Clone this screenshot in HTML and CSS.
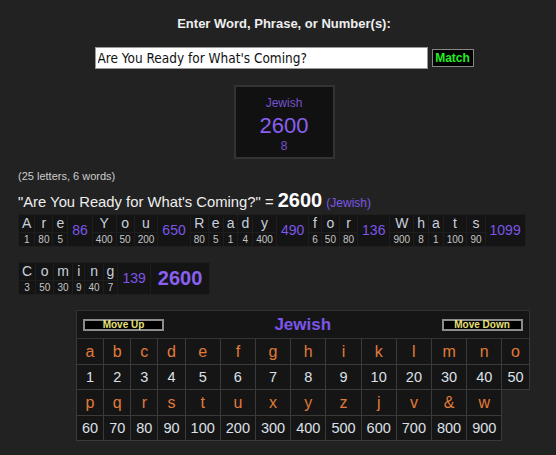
FILE: index.html
```html
<!DOCTYPE html>
<html lang="en">
<head>
    <meta charset="UTF-8">
    <title>Gematria Calculator</title>
    <link rel="stylesheet" href="styles.css">
</head>
<body>
    <div class="top">
        <div class="prompt">Enter Word, Phrase, or Number(s):</div>
        <div class="entry">
            <input class="phrase" type="text" value="Are You Ready for What's Coming?">
            <button class="match">Match</button>
        </div>
        <div class="cipher-box">
            <div class="cb-name">Jewish</div>
            <div class="cb-value">2600</div>
            <div class="cb-reduced">8</div>
        </div>
    </div>

    <div class="results">
        <div class="counts">(25 letters, 6 words)</div>
        <div class="summary">"Are You Ready for What's Coming?" = <b>2600</b> <span class="cipher-name">(Jewish)</span></div>

        <table class="word-line">
            <tr class="letters">
                <td>A</td><td>r</td><td>e</td><td class="sum" rowspan="2">86</td>
                <td>Y</td><td>o</td><td>u</td><td class="sum" rowspan="2">650</td>
                <td>R</td><td>e</td><td>a</td><td>d</td><td>y</td><td class="sum" rowspan="2">490</td>
                <td>f</td><td>o</td><td>r</td><td class="sum" rowspan="2">136</td>
                <td>W</td><td>h</td><td>a</td><td>t</td><td>s</td><td class="sum" rowspan="2">1099</td>
            </tr>
            <tr class="values">
                <td>1</td><td>80</td><td>5</td>
                <td>400</td><td>50</td><td>200</td>
                <td>80</td><td>5</td><td>1</td><td>4</td><td>400</td>
                <td>6</td><td>50</td><td>80</td>
                <td>900</td><td>8</td><td>1</td><td>100</td><td>90</td>
            </tr>
        </table>

        <table class="word-line">
            <tr class="letters">
                <td>C</td><td>o</td><td>m</td><td>i</td><td>n</td><td>g</td><td class="sum" rowspan="2">139</td>
                <td class="total" rowspan="2">2600</td>
            </tr>
            <tr class="values">
                <td>3</td><td>50</td><td>30</td><td>9</td><td>40</td><td>7</td>
            </tr>
        </table>

        <table class="chart">
            <tr>
                <td class="chart-head" colspan="14">
                    <div class="head-bar">
                        <button class="move">Move Up</button>
                        <span class="chart-title">Jewish</span>
                        <button class="move">Move Down</button>
                    </div>
                </td>
            </tr>
            <tr class="chart-letters">
                <td>a</td><td>b</td><td>c</td><td>d</td><td>e</td><td>f</td><td>g</td>
                <td>h</td><td>i</td><td>k</td><td>l</td><td>m</td><td>n</td><td>o</td>
            </tr>
            <tr class="chart-values">
                <td>1</td><td>2</td><td>3</td><td>4</td><td>5</td><td>6</td><td>7</td>
                <td>8</td><td>9</td><td>10</td><td>20</td><td>30</td><td>40</td><td>50</td>
            </tr>
            <tr class="chart-letters">
                <td>p</td><td>q</td><td>r</td><td>s</td><td>t</td><td>u</td><td>x</td>
                <td>y</td><td>z</td><td>j</td><td>v</td><td>&amp;</td><td>w</td>
            </tr>
            <tr class="chart-values">
                <td>60</td><td>70</td><td>80</td><td>90</td><td>100</td><td>200</td><td>300</td>
                <td>400</td><td>500</td><td>600</td><td>700</td><td>800</td><td>900</td>
            </tr>
        </table>
    </div>
</body>
</html>
```

FILE: styles.css
```css
body { margin: 0; background-color: #222; color: #ddd; font-family: "Liberation Sans", Arial, sans-serif; }

.top { padding: 16px 0 0 12px; text-align: center; }
.prompt { font-size: 13px; font-weight: bold; line-height: 16px; color: #eee; }
.entry { display: flex; justify-content: center; align-items: center; gap: 4px; margin-top: 15px; }
.phrase { width: 333px; height: 22px; box-sizing: border-box; margin: 0; padding: 0 2px; border: 1px solid #999; background: #fff; color: #111; font-family: "DejaVu Sans Condensed", "DejaVu Sans", sans-serif; font-stretch: condensed; font-size: 13.5px; }
.match { height: 18px; width: 42px; margin: 0; padding: 0; background: #000; border: 1px solid #888; color: #22ee22; font-family: "Liberation Sans", Arial, sans-serif; font-weight: bold; font-size: 12px; }
.cipher-box { width: 97px; margin: 16px auto 0; padding: 9px 0 4px; border: 2px solid #333; background: #111; color: #7452d0; }
.cb-name { font-size: 12px; line-height: 14px; margin-bottom: 3px; }
.cb-value { font-size: 22px; line-height: 26px; color: #8a60f0; }
.cb-reduced { font-size: 12px; line-height: 14px; }

.results { padding-left: 18px; }
.counts { margin-top: 11px; font-size: 11px; line-height: 13px; color: #ccc; }
.summary { margin-top: 6px; font-size: 14.8px; line-height: 22px; color: #eee; }
.summary b { font-size: 20px; color: #fff; }
.cipher-name { font-size: 12px; color: #7c56e8; }

.word-line { border-collapse: collapse; margin-bottom: 15px; background: #171717; }
.word-line td { padding: 0 3px; border: 1px solid #1e1e1e; background: #141414; text-align: center; }
.word-line .letters td { font-size: 14px; line-height: 17px; color: #c8d0dc; }
.word-line .values td { font-size: 10px; line-height: 13px; color: #c4c4c4; }
.word-line .letters td.sum { font-size: 14px; color: #7c56e8; padding: 0 4px; }
.word-line .letters td.total { font-size: 20px; font-weight: bold; color: #8a60f0; padding: 0 7px; }

.chart { width: 452px; border-collapse: collapse; margin: 4px 0 0 58px; }
.chart td { padding: 0 5px; border: 1px solid #3a3a3a; background: #151515; text-align: center; }
.chart td.chart-head { padding: 0; border: 1px solid #333; }
.head-bar { display: flex; justify-content: space-between; align-items: center; height: 27px; padding: 0 6px; }
.move { flex: none; width: 81px; height: 12px; margin: 0; padding: 0; background: #000; border: 2px solid #8c8c8c; color: #e6e07a; font-family: "Liberation Sans", Arial, sans-serif; font-size: 10px; font-weight: bold; line-height: 8px; }
.chart-title { font-size: 17px; font-weight: bold; color: #7c56e8; }
.chart-letters td { height: 25px; font-size: 16px; color: #e07b3a; }
.chart-values td { height: 24px; font-size: 14.5px; color: #dde0e8; }
```
